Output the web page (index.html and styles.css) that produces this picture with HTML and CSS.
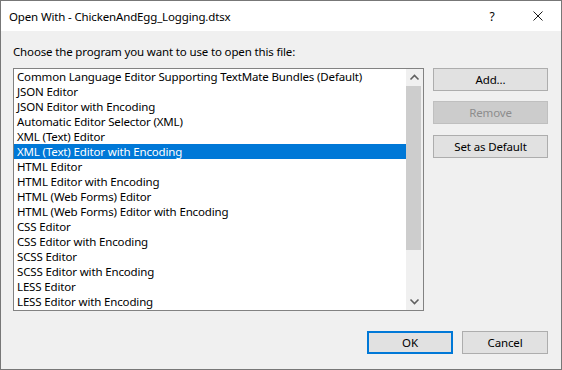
FILE: index.html
```html
<!DOCTYPE html>
<html>
<head>
<meta charset="utf-8">
<link rel="stylesheet" href="styles.css">
</head>
<body>
<div class="window">
  <div class="titlebar">
    <span class="title">Open With - ChickenAndEgg_Logging.dtsx</span>
    <span class="cap help">?</span>
    <span class="cap close">
      <svg width="10" height="10" viewBox="0 0 10 10"><path d="M0.5 0.5 L9.5 9.5 M9.5 0.5 L0.5 9.5" stroke="#1a1a1a" stroke-width="1" fill="none"/></svg>
    </span>
  </div>
  <div class="content">
    <div class="prompt">Choose the program you want to use to open this file:</div>
    <div class="main">
      <div class="listbox">
        <ul class="items">
          <li>Common Language Editor Supporting TextMate Bundles (Default)</li>
          <li>JSON Editor</li>
          <li>JSON Editor with Encoding</li>
          <li>Automatic Editor Selector (XML)</li>
          <li>XML (Text) Editor</li>
          <li class="selected">XML (Text) Editor with Encoding</li>
          <li>HTML Editor</li>
          <li>HTML Editor with Encoding</li>
          <li>HTML (Web Forms) Editor</li>
          <li>HTML (Web Forms) Editor with Encoding</li>
          <li>CSS Editor</li>
          <li>CSS Editor with Encoding</li>
          <li>SCSS Editor</li>
          <li>SCSS Editor with Encoding</li>
          <li>LESS Editor</li>
          <li>LESS Editor with Encoding</li>
        </ul>
        <div class="scrollbar">
          <div class="arrow">
            <svg width="17" height="17" viewBox="0 0 17 17"><path d="M4.5 10.5 L8.5 6.5 L12.5 10.5" stroke="#606060" stroke-width="1.6" fill="none"/></svg>
          </div>
          <div class="track"><div class="thumb"></div></div>
          <div class="arrow">
            <svg width="17" height="17" viewBox="0 0 17 17"><path d="M4.5 6.5 L8.5 10.5 L12.5 6.5" stroke="#606060" stroke-width="1.6" fill="none"/></svg>
          </div>
        </div>
      </div>
      <div class="side">
        <div class="btn add">Add...</div>
        <div class="btn disabled remove">Remove</div>
        <div class="btn setdefault">Set as Default</div>
      </div>
    </div>
    <div class="footer">
      <div class="btn default wide">OK</div>
      <div class="btn wide">Cancel</div>
    </div>
  </div>
</div>
</body>
</html>
```
FILE: styles.css
```css
html, body {
  margin: 0;
  padding: 0;
  background: #f0f0f0;
}
body {
  font-family: "Noto Sans", "Open Sans", sans-serif;
  font-size: 11.5px;
  letter-spacing: -0.15px;
  color: #000;
}
.window {
  width: 562px;
  height: 370px;
  box-sizing: border-box;
  border: 1px solid #777777;
  display: flex;
  flex-direction: column;
  overflow: hidden;
}
.titlebar {
  height: 30px;
  background: #ffffff;
  display: flex;
  align-items: center;
  padding-left: 8px;
  flex: none;
}
.title {
  flex: 1;
  white-space: nowrap;
}
.cap {
  width: 46px;
  height: 30px;
  display: flex;
  align-items: center;
  justify-content: center;
}
.help {
  font-size: 12px;
}
.content {
  flex: 1;
  padding: 13px 13px 0 12px;
  display: flex;
  flex-direction: column;
}
.prompt {
  line-height: 15px;
  height: 15px;
  margin-bottom: 9px;
  white-space: nowrap;
}
.main {
  display: flex;
  gap: 9px;
}
.listbox {
  width: 411px;
  height: 243px;
  box-sizing: border-box;
  border: 1px solid #828282;
  background: #ffffff;
  display: flex;
}
.items {
  flex: 1;
  list-style: none;
  margin: 0;
  padding: 0;
  overflow: hidden;
}
.items li {
  height: 15px;
  line-height: 15px;
  padding-left: 3px;
  white-space: nowrap;
}
.items li.selected {
  background: #0078d7;
  color: #ffffff;
}
.scrollbar {
  width: 17px;
  background: #f0f0f0;
  display: flex;
  flex-direction: column;
}
.arrow {
  height: 17px;
  flex: none;
}
.arrow svg {
  display: block;
}
.track {
  flex: 1;
}
.thumb {
  height: 164px;
  width: 15px;
  background: #cdcdcd;
}
.side {
  width: 115px;
  display: flex;
  flex-direction: column;
}
.btn {
  height: 23px;
  box-sizing: border-box;
  border: 1px solid #adadad;
  background: #e1e1e1;
  text-align: center;
  line-height: 21px;
  white-space: nowrap;
}
.btn.disabled {
  background: #cccccc;
  border-color: #bfbfbf;
  color: #8d8d8d;
}
.btn.remove {
  margin-top: 10px;
}
.btn.setdefault {
  margin-top: 11px;
}
.footer {
  margin-top: 20px;
  display: flex;
  justify-content: flex-end;
  gap: 9px;
}
.btn.wide {
  width: 86px;
}
.btn.default {
  border: 2px solid #0078d7;
  line-height: 19px;
}
```
